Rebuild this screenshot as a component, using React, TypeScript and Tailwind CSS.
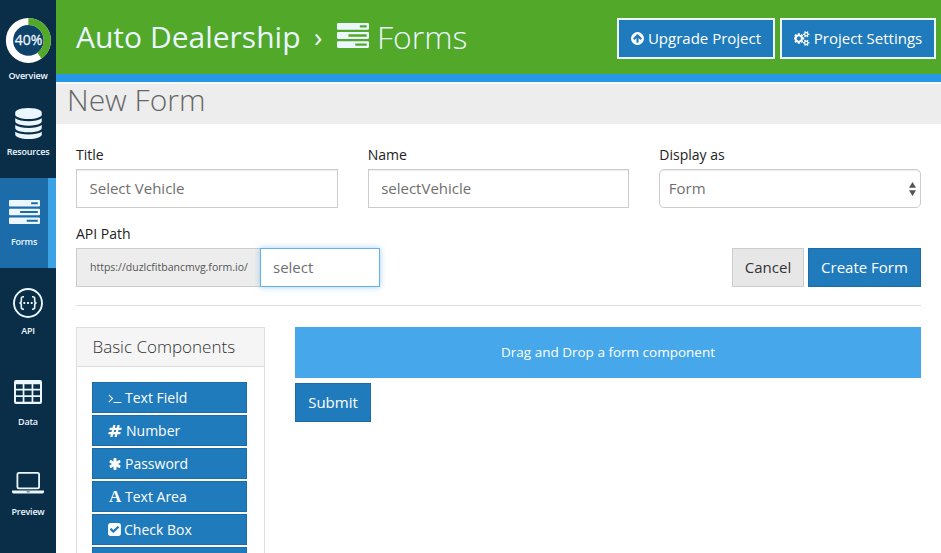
import React from "react";

const COG =
  "M832 896q0-106-75-181t-181-75-181 75-75 181 75 181 181 75 181-75 75-181zm768 512q0-52-38-90t-90-38-90 38-38 90q0 53 37.5 90.5t90.5 37.5 90.5-37.5 37.5-90.5zm0-1024q0-52-38-90t-90-38-90 38-38 90q0 53 37.5 90.5t90.5 37.5 90.5-37.5 37.5-90.5zm-384 421v185q0 10-7 19.5t-16 10.5l-155 24q-11 35-32 76 34 48 90 115 7 11 7 20 0 12-7 19-23 30-82.5 89.5t-78.5 59.5q-11 0-21-7l-115-90q-37 19-77 31-11 108-23 155-7 24-30 24h-186q-11 0-20-7.5t-10-17.5l-23-153q-34-10-75-31l-118 89q-7 7-20 7-11 0-21-8-144-133-144-160 0-9 7-19 10-14 41-53t47-61q-23-44-35-82l-152-24q-10-1-17-9.5t-7-19.5v-185q0-10 7-19.5t16-10.5l155-24q11-35 32-76-34-48-90-115-7-11-7-20 0-12 7-20 22-30 82-89t79-59q11 0 21 7l115 90q34-18 77-32 11-108 23-154 7-24 30-24h186q11 0 20 7.5t10 17.5l23 153q34 10 75 31l118-89q8-7 20-7 11 0 21 8 144 133 144 160 0 8-7 19-12 16-42 54t-45 60q23 48 34 82l152 23q10 2 17 10.5t7 19.5zm640 533v140q0 16-149 31-12 27-30 52 51 113 51 138 0 4-4 7-122 71-124 71-8 0-46-47t-52-68q-20 2-30 2t-30-2q-14 21-52 68t-46 47q-2 0-124-71-4-3-4-7 0-25 51-138-18-25-30-52-149-15-149-31v-140q0-16 149-31 13-29 30-52-51-113-51-138 0-4 4-7 4-2 35-20t59-34 30-16q8 0 46 46.5t52 67.5q20-2 30-2t30 2q51-71 92-112l6-2q4 0 124 70 4 3 4 7 0 25-51 138 17 23 30 52 149 15 149 31zm0-1024v140q0 16-149 31-12 27-30 52 51 113 51 138 0 4-4 7-122 71-124 71-8 0-46-47t-52-68q-20 2-30 2t-30-2q-14 21-52 68t-46 47q-2 0-124-71-4-3-4-7 0-25 51-138-18-25-30-52-149-15-149-31v-140q0-16 149-31 13-29 30-52-51-113-51-138 0-4 4-7 4-2 35-20t59-34 30-16q8 0 46 46.5t52 67.5q20-2 30-2t30 2q51-71 92-112l6-2q4 0 124 70 4 3 4 7 0 25-51 138 17 23 30 52 149 15 149 31z";
const ARROW_UP =
  "M1412 895q0-27-18-45l-362-362-91-91q-18-18-45-18t-45 18l-91 91-362 362q-18 18-18 45t18 45l91 91q18 18 45 18t45-18l189-189v502q0 26 19 45t45 19h128q26 0 45-19t19-45v-502l189 189q19 19 45 19t45-19l91-91q18-18 18-45zm252 1q0 209-103 385.5t-279.5 279.5-385.5 103-385.5-103-279.5-279.5-103-385.5 103-385.5 279.5-279.5 385.5-103 385.5 103 279.5 279.5 103 385.5z";
const TERMINAL =
  "M649 983l-466 466q-10 10-23 10t-23-10l-50-50q-10-10-10-23t10-23l393-393-393-393q-10-10-10-23t10-23l50-50q10-10 23-10t23 10l466 466q10 10 10 23t-10 23zm1079 457v64q0 14-9 23t-23 9h-960q-14 0-23-9t-9-23v-64q0-14 9-23t23-9h960q14 0 23 9t9 23z";
const HASH =
  "M991 1024l64-256h-254l-64 256h254zm768-504l-56 224q-7 24-31 24h-327l-64 256h311q15 0 25 12 10 14 6 28l-56 224q-5 24-31 24h-327l-81 328q-7 24-31 24h-224q-16 0-26-12-9-12-6-28l78-312h-254l-81 328q-7 24-31 24h-225q-15 0-25-12-9-12-6-28l78-312h-311q-15 0-25-12-9-12-6-28l56-224q7-24 31-24h327l64-256h-311q-15 0-25-12-10-14-6-28l56-224q5-24 31-24h327l81-328q7-24 32-24h224q15 0 25 12 9 12 6 28l-78 312h254l81-328q7-24 32-24h224q15 0 25 12 9 12 6 28l-78 312h311q15 0 25 12 9 12 6 28z";
const ASTERISK =
  "M1546 1050q46 26 59.5 77.5t-12.5 97.5l-64 110q-26 46-77.5 59.5t-97.5-12.5l-266-153v307q0 52-38 90t-90 38h-128q-52 0-90-38t-38-90v-307l-266 153q-46 26-97.5 12.5t-77.5-59.5l-64-110q-26-46-12.5-97.5t59.5-77.5l266-154-266-154q-46-26-59.5-77.5t12.5-97.5l64-110q26-46 77.5-59.5t97.5 12.5l266 153v-307q0-52 38-90t90-38h128q52 0 90 38t38 90v307l266-153q46-26 97.5-12.5t77.5 59.5l64 110q26 46 12.5 97.5t-59.5 77.5l-266 154z";
const CHECK =
  "M813 1299l614-614q19-19 19-45t-19-45l-102-102q-19-19-45-19t-45 19l-467 467-211-211q-19-19-45-19t-45 19l-102 102q-19 19-19 45t19 45l358 358q19 19 45 19t45-19zm851-883v960q0 119-84.5 203.5t-203.5 84.5h-960q-119 0-203.5-84.5t-84.5-203.5v-960q0-119 84.5-203.5t203.5-84.5h960q119 0 203.5 84.5t84.5 203.5z";
const DATABASE =
  "M832 768q237 0 443-43t325-127v170q0 69-103 128t-280 93.5-385 34.5-385-34.5-280-93.5-103-128v-170q119 84 325 127t443 43zm0 768q237 0 443-43t325-127v170q0 69-103 128t-280 93.5-385 34.5-385-34.5-280-93.5-103-128v-170q119 84 325 127t443 43zm0-384q237 0 443-43t325-127v170q0 69-103 128t-280 93.5-385 34.5-385-34.5-280-93.5-103-128v-170q119 84 325 127t443 43zm0-1152q208 0 385 34.5t280 93.5 103 128v128q0 69-103 128t-280 93.5-385 34.5-385-34.5-280-93.5-103-128v-128q0-69 103-128t280-93.5 385-34.5z";

function Glyph({ d, box = "0 0 1792 1792", className }: { d: string; box?: string; className: string }) {
  return (
    <svg viewBox={box} className={`shrink-0 ${className}`} fill="currentColor">
      <path d={d} />
    </svg>
  );
}

/** Three stacked bars, each with a cut-out slot. */
function Tasks({ className }: { className: string }) {
  return (
    <svg viewBox="0 0 1792 1408" preserveAspectRatio="none" className={`shrink-0 ${className}`} fill="currentColor" fillRule="evenodd">
      <path d="M64 0h1664q64 0 64 64v256q0 64-64 64h-1664q-64 0-64-64v-256q0-64 64-64zM1280 128v128h384v-128z" />
      <path d="M64 512h1664q64 0 64 64v256q0 64-64 64h-1664q-64 0-64-64v-256q0-64 64-64zM640 640v128h1024v-128z" />
      <path d="M64 1024h1664q64 0 64 64v256q0 64-64 64h-1664q-64 0-64-64v-256q0-64 64-64zM1024 1152v128h640v-128z" />
    </svg>
  );
}

function Progress() {
  return (
    <svg viewBox="0 0 46 46" className="mt-[17px] h-[46px] w-[46px]">
      <circle cx="23.4" cy="23.4" r="16" fill="#0f4268" />
      <circle cx="23.4" cy="23.4" r="18.9" fill="none" stroke="#fff" strokeWidth="7.2" />
      <circle cx="23.4" cy="23.4" r="18.9" fill="none" stroke="#52a829" strokeWidth="7.2" pathLength="100" strokeDasharray="40 60" transform="rotate(-90 23.4 23.4)" />
      <text x="23.5" y="28" textAnchor="middle" fontSize="14" fill="#ebf6ff" stroke="#ebf6ff" strokeWidth="0.3" textLength="27.5">40%</text>
    </svg>
  );
}

function ApiIcon() {
  return (
    <svg viewBox="0 0 30 30" className="mt-5 h-[30px] w-[30px]" fill="none" stroke="#ebf6ff">
      <circle cx="15" cy="15" r="14" strokeWidth="1.9" />
      <path strokeWidth="1.6" d="M11 8.8H10.2Q8.3 8.8 8.3 10.7V13Q8.3 15 6.4 15Q8.3 15 8.3 17V19.3Q8.3 21.2 10.2 21.2H11M19 8.8H19.8Q21.7 8.8 21.7 10.7V13Q21.7 15 23.6 15Q21.7 15 21.7 17V19.3Q21.7 21.2 19.8 21.2H19" />
      <path strokeWidth="1.8" d="M10.4 15h1.8M14.1 15h1.8M17.8 15h1.8" />
    </svg>
  );
}

function TableIcon() {
  return (
    <svg viewBox="0 0 28 24" className="mt-[22px] h-6 w-7" fill="#ebf6ff" fillRule="evenodd">
      <path d="M2 0H26Q28 0 28 2V22Q28 24 26 24H2Q0 24 0 22V2Q0 0 2 0ZM2 4.3V8.7H8.7V4.3ZM10.4 4.3V8.7H17.6V4.3ZM19.3 4.3V8.7H26V4.3ZM2 10.6V15.2H8.7V10.6ZM10.4 10.6V15.2H17.6V10.6ZM19.3 10.6V15.2H26V10.6ZM2 17V21.7H8.7V17ZM10.4 17V21.7H17.6V17ZM19.3 17V21.7H26V17Z" />
    </svg>
  );
}

function LaptopIcon() {
  return (
    <svg viewBox="0 0 32 22" className="mt-6 h-[22px] w-8" fill="#ebf6ff" fillRule="evenodd">
      <path d="M7 0H25.5Q28 0 28 2.5V14.7Q28 17.2 25.5 17.2H7Q4.5 17.2 4.5 14.7V2.5Q4.5 0 7 0ZM7 1.7Q6.3 1.7 6.3 2.4V14.8Q6.3 15.5 7 15.5H25.5Q26.2 15.5 26.2 14.8V2.4Q26.2 1.7 25.5 1.7Z" />
      <path d="M0 18.6H32V20Q32 21.6 29 21.6H3Q0 21.6 0 20ZM14.7 19.5V20.3H17.7V19.5Z" />
    </svg>
  );
}

function NavItem({ label, active, className = "h-[90px]", labelClass, children }: { label: string; active?: boolean; className?: string; labelClass: string; children: React.ReactNode }) {
  return (
    <a className={`flex w-14 shrink-0 flex-col items-center text-[#ebf6ff] ${className} ${active ? "border-r-8 border-[#3ba2e6] bg-[#1b6ca8]" : ""}`}>
      {children}
      <span className={`text-[9px] leading-3 font-semibold tracking-[-0.2px] ${labelClass}`}>{label}</span>
    </a>
  );
}

function Field({ label, children }: { label: string; children: React.ReactNode }) {
  return (
    <label className="flex flex-col">
      <span className="mb-1 text-sm leading-5 text-[#222]">{label}</span>
      {children}
    </label>
  );
}

const box = "flex h-[39px] items-center border border-[#ccc] pl-[12.5px] pr-3 text-[15px] text-[#6f6f6f] shadow-[inset_0_1px_1px_rgba(0,0,0,0.075)]";

const components = [
  { label: "Text Field", d: TERMINAL, icon: "w-[14px] h-[14px] mr-[3px]" },
  { label: "Number", d: HASH, icon: "w-[14px] h-[14px] mr-1" },
  { label: "Password", d: ASTERISK, icon: "w-[14px] h-[14px] mr-[3px]" },
  { label: "Text Area", d: "", icon: "" },
  { label: "Check Box", d: CHECK, icon: "w-[15px] h-[15px] -ml-px mr-[2px]" },
];

export default function App() {
  return (
    <div className="flex h-[553px] w-[941px] overflow-hidden bg-white font-['Open_Sans',sans-serif] text-[#222]">
      <nav className="flex w-14 shrink-0 flex-col bg-[#0a2e47]">
        <NavItem label="Overview" className="h-[88px]" labelClass="mt-[7px]"><Progress /></NavItem>
        <NavItem label="Resources" labelClass="mt-[7px]"><Glyph d={DATABASE} box="64 0 1536 1792" className="mt-5 h-[31px] w-[27px]" /></NavItem>
        <NavItem label="Forms" active labelClass="mt-3"><Tasks className="mt-[22px] h-6 w-[31px]" /></NavItem>
        <NavItem label="API" labelClass="mt-[7px]"><ApiIcon /></NavItem>
        <NavItem label="Data" labelClass="mt-3"><TableIcon /></NavItem>
        <NavItem label="Preview" labelClass="mt-3"><LaptopIcon /></NavItem>
      </nav>

      <div className="flex min-w-0 flex-1 flex-col">
        <header className="flex h-[82px] shrink-0 justify-between border-b-8 border-[#2798e8] bg-[#52a829] pr-[5px] pl-5 text-[#ebf6ff]">
          <h1 className="flex h-[74px] items-center text-[30px] whitespace-nowrap">
            <span className="mt-[-2px] w-[225px]">Auto Dealership</span>
            <span className="mt-[-2px] ml-[13px] w-3 text-[28px]">›</span>
            <Tasks className="mt-[-3px] ml-[11px] h-[25px] w-8" />
            <span className="ml-2 text-[32px] font-light">Forms</span>
          </h1>
          <div className="flex gap-[5px] pt-[18px] text-[15px] text-white">
            <button className="flex h-[41px] w-[158px] items-center justify-center gap-[3px] border-2 border-[#ebf6ff] bg-[#1f7bbc] pr-px whitespace-nowrap">
              <Glyph d={ARROW_UP} className="h-[15px] w-[15px]" />Upgrade Project
            </button>
            <button className="flex h-[41px] w-[156px] items-center justify-center gap-1 border-2 border-[#ebf6ff] bg-[#1f7bbc] whitespace-nowrap">
              <Glyph d={COG} box="0 0 1920 1792" className="h-[15px] w-4" />Project Settings
            </button>
          </div>
        </header>
        <h2 className="flex h-[42px] shrink-0 items-center border-t-2 border-[#f7f8fa] bg-[#ededed] pb-2 pl-[11px] text-[30px] leading-8 font-light text-[#666]">New Form</h2>

        <main className="px-5 pt-[21px]">
          <div className="grid grid-cols-3 gap-x-[30px]">
            <Field label="Title"><span className={box}>Select Vehicle</span></Field>
            <Field label="Name"><span className={box}>selectVehicle</span></Field>
            <Field label="Display as">
              <span className="flex h-[39px] items-center justify-between rounded-[5px] border border-[#ccc] pr-1 pl-[8.5px] text-[15px] text-[#6f6f6f] shadow-[inset_0_1px_1px_rgba(0,0,0,0.075)]">
                Form
                <svg viewBox="0 0 7 14" className="h-[14px] w-[7px]" fill="#555"><path d="M3.5 0L7 5.7H0ZM3.5 14L0 8.3H7Z" /></svg>
              </span>
            </Field>
          </div>

          <div className="mt-4 flex items-end justify-between">
            <Field label="API Path">
              <span className="flex">
                <span className="flex h-[39px] w-[184px] items-center border border-r-0 border-[#ccc] bg-[#ededed] pl-[13px] text-[10.5px] text-[#555]">https://duzlcfitbancmvg.form.io/</span>
                <span className="flex h-[39px] w-[120px] items-center border border-[#66afe9] bg-white px-3 text-[15px] text-[#6f6f6f] shadow-[0_0_6px_rgba(102,175,233,0.6)]">select</span>
              </span>
            </Field>
            <div className="flex gap-1 text-[15px]">
              <button className="h-[39px] w-[72px] border border-[#ccc] bg-[#e7e7e7] text-[#333]">Cancel</button>
              <button className="h-[39px] w-[113px] border border-[#1b6ca8] bg-[#1f7bbc] text-white">Create Form</button>
            </div>
          </div>

          <hr className="mt-[18px] border-[#ddd]" />

          <div className="mt-[21px] flex gap-[30px]">
            <section className="w-[189px] border border-[#ddd]">
              <h3 className="flex h-[39px] items-center border-b border-[#ddd] bg-[#f5f5f5] pl-[15.5px] text-[17px] font-light text-[#333]">Basic Components</h3>
              <div className="flex flex-col gap-[2px] px-[15px] pt-[15px]">
                {components.map((c) => (
                  <div key={c.label} className="flex h-[31px] w-[155px] items-center border border-[#1b6ca8] bg-[#1f7bbc] pl-[15px] text-sm text-white">
                    {c.d ? <Glyph d={c.d} className={c.icon} /> : <span className="mt-px mr-[3px] ml-px w-[13px] font-['Liberation_Serif',serif] text-[17px] font-bold">A</span>}
                    {c.label}
                  </div>
                ))}
                <div className="h-[31px] w-[155px] border border-[#1b6ca8] bg-[#1f7bbc]" />
              </div>
            </section>
            <section className="flex flex-1 flex-col items-start">
              <div className="flex h-[51px] w-full items-center justify-center bg-[#46a8ea] text-[13.5px] text-white">Drag and Drop a form component</div>
              <button className="mt-[5px] h-[39px] w-[76px] border border-[#1b6ca8] bg-[#1f7bbc] text-[15px] text-white">Submit</button>
            </section>
          </div>
        </main>
      </div>
    </div>
  );
}
